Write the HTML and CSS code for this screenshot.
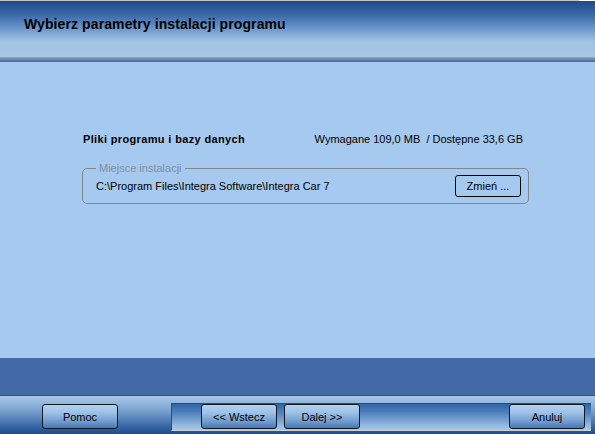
FILE: index.html
```html
<!DOCTYPE html>
<html lang="pl">
<head>
<meta charset="utf-8">
<title>Instalator</title>
<link rel="stylesheet" href="styles.css">
</head>
<body>
<div class="window">
  <div class="topline"></div>
  <div class="header">
    <h1 class="title">Wybierz parametry instalacji programu</h1>
  </div>
  <div class="header-shade"></div>
  <main class="content">
    <div class="info-row">
      <span class="info-label">Pliki programu i bazy danych</span>
      <span class="info-size">Wymagane 109,0 MB&nbsp;&nbsp;/ Dostępne 33,6 GB</span>
    </div>
    <fieldset class="group">
      <legend class="group-legend">Miejsce instalacji</legend>
      <div class="group-body">
        <span class="path">C:\Program Files\Integra Software\Integra Car 7</span>
        <button class="btn-plain">Zmień ...</button>
      </div>
    </fieldset>
  </main>
  <div class="band"></div>
  <footer class="footer">
    <button class="btn">Pomoc</button>
    <div class="inset">
      <button class="btn">&lt;&lt; Wstecz</button>
      <button class="btn">Dalej &gt;&gt;</button>
      <span class="spacer"></span>
      <button class="btn">Anuluj</button>
    </div>
  </footer>
</div>
</body>
</html>
```
FILE: styles.css
```css
html, body {
  margin: 0;
  padding: 0;
}
body {
  width: 595px;
  height: 434px;
  overflow: hidden;
  font-family: "Liberation Sans", Arial, sans-serif;
  font-size: 11px;
  color: #000;
  background: #a6c9ef;
}
.window {
  display: flex;
  flex-direction: column;
  width: 595px;
  height: 434px;
}
.topline {
  height: 1px;
  flex: none;
  background: linear-gradient(to right, #c4c4c4 0, #c4c4c4 579px, #ffffff 579px);
}
.header {
  height: 56px;
  flex: none;
  display: flex;
  align-items: flex-start;
  background: linear-gradient(to bottom, #1e4a8c 0%, #3a69a8 25%, #6e99cc 50%, #a2c2e2 72%, #a8c8e4 100%);
}
.title {
  margin: 15px 0 0 24px;
  font-size: 14px;
  font-weight: bold;
  line-height: 16px;
  letter-spacing: 0.1px;
}
.header-shade {
  height: 5px;
  flex: none;
  background: linear-gradient(to bottom, #8aa8cc 0%, #6e8cb6 40%, #4a6898 100%);
}
.content {
  flex: 1;
  padding: 69px 66px 0 81px;
  border-left: 1px solid #a6c9ef;
}
.info-row {
  display: flex;
  justify-content: space-between;
  align-items: baseline;
  padding: 0 6px 0 1px;
  height: 16px;
  line-height: 16px;
}
.info-label {
  font-weight: bold;
  letter-spacing: 0.35px;
}
.group {
  margin: 15px 0 0 0;
  padding: 0;
  border: 1px solid #808890;
  border-radius: 5px;
  min-width: 0;
}
.group-legend {
  color: #8090a0;
  padding: 0 3px;
  margin-left: 13px;
  line-height: 12px;
}
.group-body {
  display: flex;
  align-items: center;
  justify-content: space-between;
  height: 22px;
  padding: 1px 7px 6px 13px;
}
.path {
  line-height: 14px;
}
.btn-plain {
  width: 66px;
  height: 22px;
  border: 1px solid #000;
  border-radius: 3px;
  background: transparent;
  font-family: inherit;
  font-size: 11px;
  color: #000;
  padding: 0;
}
.band {
  height: 37px;
  flex: none;
  background: #436aa6;
  border-bottom: 1px solid #2a5290;
}
.footer {
  height: 38px;
  flex: none;
  display: flex;
  align-items: flex-start;
  padding: 7px 4px 0 42px;
  box-sizing: border-box;
  background: linear-gradient(to bottom, #a8c8e8 0%, #7fa6d2 35%, #3f6eaa 75%, #1f4a8c 100%);
}
.btn {
  width: 76px;
  height: 25px;
  margin-top: 1px;
  border: 1px solid #101820;
  border-radius: 3px;
  background: linear-gradient(to bottom, #b4d2f0 0%, #9cc0e6 35%, #6c98cc 75%, #4676b4 100%);
  font-family: inherit;
  font-size: 11px;
  color: #000;
  padding: 0;
  flex: none;
}
.inset {
  margin-left: 53px;
  flex: 1;
  height: 28px;
  box-sizing: border-box;
  display: flex;
  align-items: flex-start;
  gap: 7px;
  padding: 0 6px 0 29px;
  border-top: 1px solid #3a4a60;
  border-left: 1px solid #3a4a60;
  border-bottom: 1px solid #c8d0d8;
  background: linear-gradient(to bottom, #2f64a6 0%, #5a88c0 40%, #98bce2 85%, #a8c8e8 100%);
}
.inset .btn {
  margin-top: 0;
}
.spacer {
  flex: 1;
}
```
